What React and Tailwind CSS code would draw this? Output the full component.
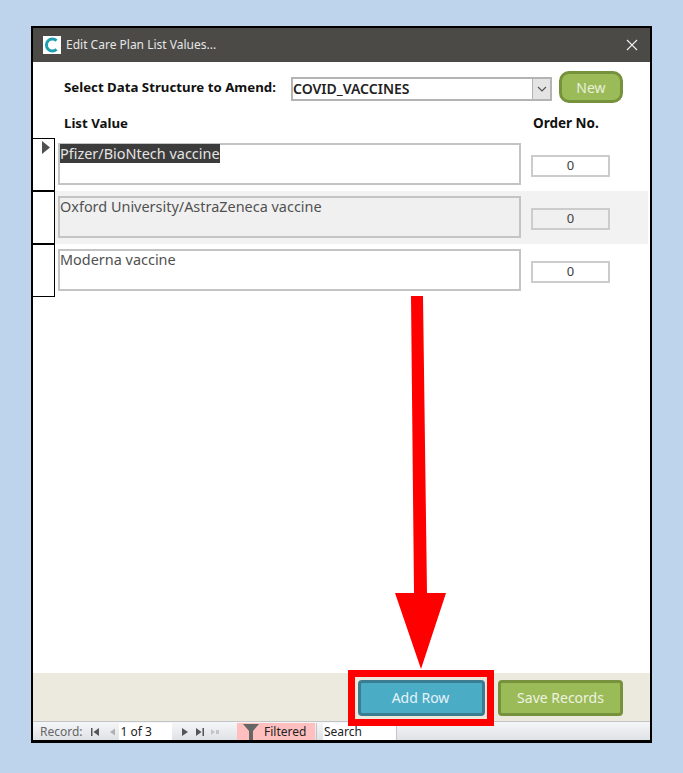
import React from "react";

const font = { fontFamily: '"Noto Sans", "Open Sans", sans-serif' };

function Logo() {
  return (
    <svg width="18" height="18" viewBox="0 0 18 18" className="shrink-0">
      <rect width="18" height="18" fill="#ffffff" />
      <path d="M13.5 4.6 A6 6 0 1 0 13.5 13.4" fill="none" stroke="#1f9fb0" strokeWidth="3" />
    </svg>
  );
}

function Row({ current, shaded, text }) {
  return (
    <div className="flex h-[53px]">
      <div className="relative w-[22px] shrink-0 border border-l-0 border-black bg-white">
        {current && (
          <svg width="8" height="13" viewBox="0 0 8 13" className="absolute left-[9px] top-[2px]">
            <path d="M0 0 L8 6.5 L0 13 Z" fill="#505050" />
          </svg>
        )}
      </div>
      <div className={`mr-[2px] flex flex-1 ${shaded ? "bg-[#f2f2f2]" : "bg-white"}`}>
        <div className={`ml-[3px] mt-[5px] h-[42px] w-[463px] border-2 border-[#c4c4c4] text-[14.45px] leading-[19px] text-[#505050] ${shaded ? "bg-[#f0f0f0]" : "bg-white"}`}>
          <div className="-mt-[1px]">
            {current ? <span className="inline-block bg-[#3c3c3c] text-[#e4e4e4]">{text}</span> : text}
          </div>
        </div>
        <div className={`ml-[10px] mt-[17px] flex h-[22px] w-[79px] items-center justify-center border-2 border-[#cccccc] text-[13px] text-[#404040] ${shaded ? "bg-[#f0f0f0]" : "bg-white"}`}>
          0
        </div>
      </div>
    </div>
  );
}

function NavIcon({ d, color = "#555555" }) {
  return (
    <svg width="10" height="10" viewBox="0 0 10 10" className="shrink-0">
      <path d={d} fill={color} />
    </svg>
  );
}

export default function App() {
  return (
    <div className="min-h-screen bg-[#bdd4ec] pl-[31px] pt-[26px]" style={font}>
      <div className="relative flex h-[717px] w-[621px] flex-col border-2 border-b-[3px] border-black bg-white">
        {/* title bar */}
        <div className="flex h-[34px] shrink-0 items-center bg-[#4b4a47] pb-[1px] pl-[10px] pr-[12px]">
          <Logo />
          <span className="ml-[5px] text-[12px] text-[#e6e6e6]">Edit Care Plan List Values...</span>
          <svg width="12" height="12" viewBox="0 0 12 12" className="ml-auto">
            <path d="M1 1 L11 11 M11 1 L1 11" stroke="#f0f0f0" strokeWidth="1.1" />
          </svg>
        </div>

        {/* header form */}
        <div className="flex h-[44px] shrink-0 items-center pl-[31px] pt-[7px]">
          <span className="w-[227px] shrink-0 text-[13.25px] font-bold text-[#111111]">Select Data Structure to Amend:</span>
          <div className="mt-[2px] flex h-[24px] w-[261px] items-center border-2 border-[#b4b4b4] text-[14px] font-semibold text-[#222222]">
            <span className="-mt-[1px]">COVID_VACCINES</span>
            <div className="ml-auto flex h-full w-[18px] items-center justify-center border-l border-[#b4b4b4] bg-[#e4e4e4]">
              <svg width="10" height="6" viewBox="0 0 10 6">
                <path d="M1 1 L5 5 L9 1" fill="none" stroke="#555555" strokeWidth="1.2" />
              </svg>
            </div>
          </div>
          <button className="ml-[7px] -mt-[1px] flex h-[32px] w-[64px] items-center justify-center rounded-[10px] border-[3px] border-[#76923c] bg-[#9bbb59] text-[14px] text-[#e9f0da]">
            New
          </button>
        </div>

        {/* column heads */}
        <div className="flex h-[32px] shrink-0 items-center pl-[31px] pt-[3px]">
          <span className="w-[469px] text-[13.25px] font-bold text-[#111111]">List Value</span>
          <span className="text-[13.5px] font-bold text-[#111111]">Order No.</span>
        </div>

        {/* rows */}
        <div className="flex-1">
          <Row current text="Pfizer/BioNtech vaccine" />
          <Row shaded text="Oxford University/AstraZeneca vaccine" />
          <Row text="Moderna vaccine" />
        </div>

        {/* footer */}
        <div className="flex h-[48px] shrink-0 items-start justify-end gap-[13px] bg-[#ece9df] pr-[27px] pt-[7px]">
          <div className="relative">
            <button className="flex h-[36px] w-[127px] items-center justify-center rounded-[4px] border-[3px] border-[#3a7c90] bg-[#4bacc6] pb-[1px] pr-[2px] text-[14px] text-[#e6f3f7]">
              Add Row
            </button>
            <div className="absolute -left-[10px] -top-[10px] z-10 h-[56px] w-[146px] border-[7px] border-[#ff0000]" />
          </div>
          <button className="flex h-[36px] w-[125px] items-center justify-center rounded-[4px] border-[3px] border-[#76923c] bg-[#9bbb59] pb-[1px] text-[14px] text-[#eef3e0]">
            Save Records
          </button>
        </div>

        {/* record navigation */}
        <div className="flex h-[19px] shrink-0 items-end border-t border-[#c4c4c8] bg-gradient-to-b from-[#f5f6f8] to-[#dfe2e6] pl-[2px] text-[12px] leading-[18px]">
          <div className="flex h-[17px] w-[200px] items-center">
            <span className="ml-[5px] text-[#666666]">Record:</span>
            <span className="ml-[7px] flex"><NavIcon d="M1 1 H2.5 V9 H1 Z M9 1 V9 L3.5 5 Z" /></span>
            <span className="ml-[7px] flex"><NavIcon d="M8 1.5 V8.5 L3 5 Z" color="#b0b0b0" /></span>
            <span className="ml-[2px] h-[17px] w-[53px] bg-white pl-[2px] text-[#222222]">1 of 3</span>
            <span className="ml-[8px] flex"><NavIcon d="M2 1 V9 L8 5 Z" /></span>
            <span className="ml-[5px] flex"><NavIcon d="M1 1 V9 L6.5 5 Z M7.5 1 H9 V9 H7.5 Z" /></span>
            <span className="ml-[5px] flex"><NavIcon d="M1 2 V8 L5 5 Z M6 3 H9 V7 H6 Z" color="#c4c4c4" /></span>
          </div>
          <div className="ml-[2px] flex h-[17px] w-[78px] items-center bg-[#ffbfbf] text-[#222222]">
            <svg width="16" height="17" viewBox="0 0 16 17" className="ml-[6px] shrink-0">
              <path d="M0 1 H16 L10 8 V17 H6 V8 Z" fill="#666666" />
            </svg>
            <span className="ml-[5px]">Filtered</span>
          </div>
          <div className="ml-[1px] h-[17px] border-l border-[#c4c4c8] pl-[6px]">
            <div className="h-[17px] w-[74px] border-r border-[#c4c4c8] bg-white pl-[1px] text-[#222222]">Search</div>
          </div>
        </div>

        {/* red arrow annotation */}
        <svg width="52" height="375" viewBox="0 0 52 375" className="absolute left-[362px] top-[268px] z-20">
          <path d="M16 0 H28 L32 297 H51 L26 373 L0 297 H19 Z" fill="#ff0000" />
        </svg>
      </div>
    </div>
  );
}
